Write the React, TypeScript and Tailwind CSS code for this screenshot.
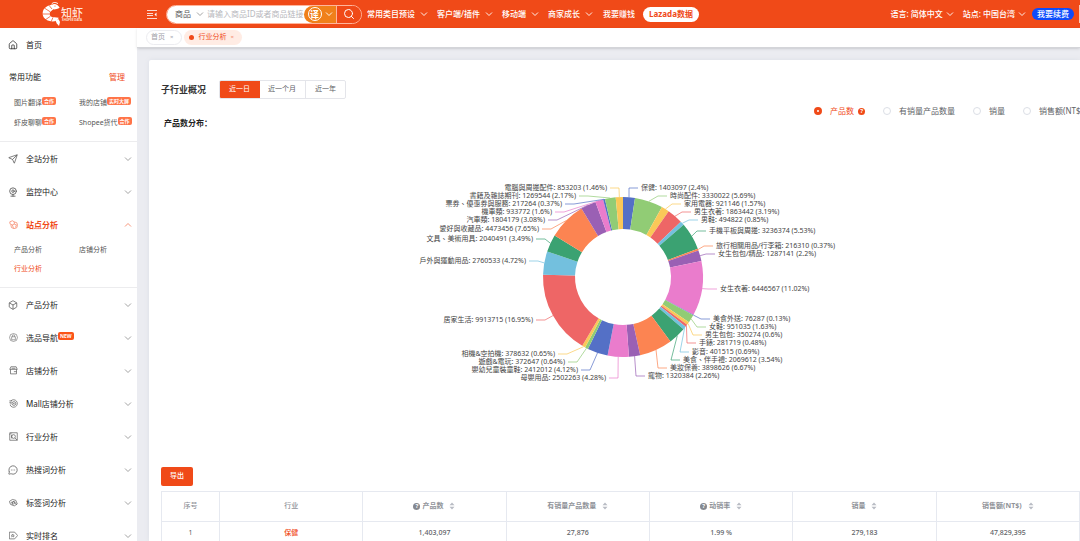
import type { ReactNode } from "react";
import { Box, House, MessageCircleMore, Search, Send, Webcam } from "lucide-react";

const PALETTE = [
  "#5470c6",
  "#91cc75",
  "#fac858",
  "#ee6666",
  "#73c0de",
  "#3ba272",
  "#fc8452",
  "#9a60b4",
  "#ea7ccc",
];

interface Slice {
  name: string;
  value: number;
  pct: string;
  x: number;
  y: number;
}

// x is the label's inner edge, y its middle line
const SLICES: Slice[] = [
  { name: "保健", value: 1403097, pct: "2.4", x: 250, y: 38 },
  { name: "時尚配件", value: 3330022, pct: "5.69", x: 279, y: 46 },
  { name: "家用電器", value: 921146, pct: "1.57", x: 293, y: 54 },
  { name: "男生衣著", value: 1863442, pct: "3.19", x: 303, y: 62 },
  { name: "男鞋", value: 494822, pct: "0.85", x: 310, y: 70 },
  { name: "手機平板與周邊", value: 3236374, pct: "5.53", x: 318, y: 81 },
  { name: "旅行相關用品/行李箱", value: 216310, pct: "0.37", x: 325, y: 96 },
  { name: "女生包包/精品", value: 1287141, pct: "2.2", x: 327, y: 104 },
  { name: "女生衣著", value: 6446567, pct: "11.02", x: 329, y: 139 },
  { name: "美食外送", value: 76287, pct: "0.13", x: 322, y: 169 },
  { name: "女鞋", value: 951035, pct: "1.63", x: 318, y: 177 },
  { name: "男生包包", value: 350274, pct: "0.6", x: 314, y: 185 },
  { name: "手錶", value: 281719, pct: "0.48", x: 308, y: 193 },
  { name: "影音", value: 401515, pct: "0.69", x: 301, y: 202 },
  { name: "美食、伴手禮", value: 2069612, pct: "3.54", x: 292, y: 210 },
  { name: "美妝保養", value: 3898626, pct: "6.67", x: 279, y: 218 },
  { name: "寵物", value: 1320384, pct: "2.26", x: 257, y: 226 },
  { name: "母嬰用品", value: 2502263, pct: "4.28", x: 215, y: 228 },
  { name: "嬰幼兒童裝童鞋", value: 2412012, pct: "4.12", x: 187, y: 220 },
  { name: "遊戲&電玩", value: 372647, pct: "0.64", x: 174, y: 212 },
  { name: "相機&空拍機", value: 378632, pct: "0.65", x: 164, y: 204 },
  { name: "居家生活", value: 9913715, pct: "16.95", x: 142, y: 170 },
  { name: "戶外與運動用品", value: 2760533, pct: "4.72", x: 135, y: 111 },
  { name: "文具、美術用具", value: 2040491, pct: "3.49", x: 142, y: 89 },
  { name: "愛好與收藏品", value: 4473456, pct: "7.65", x: 148, y: 79 },
  { name: "汽車類", value: 1804179, pct: "3.08", x: 154, y: 70 },
  { name: "機車類", value: 933772, pct: "1.6", x: 161, y: 62 },
  { name: "票券、優惠券與服務", value: 217264, pct: "0.37", x: 171, y: 54 },
  { name: "書籍及雜誌期刊", value: 1269544, pct: "2.17", x: 185, y: 46 },
  { name: "電腦與周邊配件", value: 853203, pct: "1.46", x: 216, y: 38 },
];

const CX = 232;
const CY = 127;
const OUTER = 80;
const INNER = 48;

function point(radius: number, angle: number) {
  return [CX + radius * Math.sin(angle), CY - radius * Math.cos(angle)];
}

function DonutChart() {
  const total = SLICES.reduce((sum, s) => sum + s.value, 0);
  let acc = 0;

  return (
    <svg
      viewBox="0 0 460 300"
      className="mx-auto block h-[300px] w-[460px]"
      role="img"
      aria-label="产品数分布"
    >
      {SLICES.map((s, i) => {
        const start = (acc / total) * Math.PI * 2;
        acc += s.value;
        const end = (acc / total) * Math.PI * 2;
        const mid = (start + end) / 2;
        const color = PALETTE[i % PALETTE.length];
        const right = i < 17;
        const dir = right ? -1 : 1;
        const edge = point(OUTER, mid);
        const arc = [
          `M${point(OUTER, start)}`,
          `A${OUTER} ${OUTER} 0 0 1 ${point(OUTER, end)}`,
          `L${point(INNER, end)}`,
          `A${INNER} ${INNER} 0 0 0 ${point(INNER, start)}Z`,
        ].join(" ");

        return (
          <g key={s.name}>
            <path d={arc} fill={color} />
            <polyline
              points={`${edge} ${s.x + dir * 12},${s.y} ${s.x + dir * 3},${s.y}`}
              fill="none"
              stroke={color}
              strokeWidth="0.7"
            />
            <text
              x={s.x}
              y={s.y + 2}
              textAnchor={right ? "start" : "end"}
              className="fill-[#444] font-['Noto_Sans','Noto_Sans_CJK_TC',sans-serif] text-[7px]"
            >
              {`${s.name}: ${s.value} (${s.pct}%)`}
            </text>
          </g>
        );
      })}
    </svg>
  );
}

function Chevron({ up, className = "" }: { up?: boolean; className?: string }) {
  return (
    <svg
      viewBox="0 0 8 8"
      fill="none"
      stroke="currentColor"
      className={`size-2 shrink-0 ${className}`}
    >
      <path d={up ? "M1 5.5L4 2.5L7 5.5" : "M1 2.5L4 5.5L7 2.5"} strokeWidth="0.9" />
    </svg>
  );
}

function Logo() {
  return (
    <div className="flex w-[137px] shrink-0 items-center justify-center gap-px pr-3">
      <svg viewBox="0 0 54 72" className="h-6 w-[18px]" fill="none">
        <path
          d="M30 8C38 3 48 8 53 17C46 20 40 23 34 22L25 29C20 36 23 42 31 45L50 47C47 56 38 60 26 58C10 55 1 45 2 33C3 20 12 11 30 8Z"
          fill="#fff"
        />
        <path d="M40 55L50 52L54 60L51 72L44 64Z" fill="#fff" />
        <path d="M29 7C32 0 41 0 48 5" stroke="#fff" strokeWidth="3" />
        <path
          d="M24 29L7 18M21 36L1 36M25 43L9 54M33 46L27 60M30 21L21 10"
          stroke="#f04a18"
          strokeWidth="2.2"
        />
        <circle cx="39" cy="12" r="1.6" fill="#f04a18" />
      </svg>
      <div className="flex flex-col items-center text-[#ffe3d8]">
        <span className="text-[11px] leading-[11px] font-medium">知虾</span>
        <span className="text-[3px] leading-[4px] font-bold">SHOPEE DATA</span>
      </div>
    </div>
  );
}

const NAV = ["常用类目预设", "客户端/插件", "移动端", "商家成长"];

function Header() {
  return (
    <header className="flex h-7 shrink-0 items-center bg-[#f04a18] text-[8px] whitespace-nowrap text-white">
      <Logo />
      <button type="button" aria-label="收起菜单" className="ml-[10px] shrink-0">
        <svg viewBox="0 0 10 9" className="h-[9px] w-[10px]" fill="none" stroke="#fff">
          <path d="M0 .5H10M0 3.5H6M0 5.5H6M0 8.5H10" strokeWidth="0.8" />
          <path d="M9.5 2.5V6.5L7.5 4.5Z" fill="#fff" stroke="none" />
        </svg>
      </button>

      <form className="ml-[9px] flex h-[19px] shrink-0 overflow-hidden rounded-full border border-[#ffb59c]">
        <div className="relative flex w-[39px] items-center bg-white pl-2 text-[#555]">
          <select aria-label="搜索类型" className="w-full appearance-none outline-none">
            <option>商品</option>
          </select>
          <Chevron className="pointer-events-none absolute right-[2px] text-[#999]" />
        </div>
        <div className="flex bg-white">
          <input
            type="text"
            aria-label="搜索"
            placeholder="请输入商品ID或者商品链接"
            className="w-[98px] pl-px text-[#555] outline-none placeholder:text-[#b8b8bd]"
          />
          <button
            type="button"
            aria-label="翻译"
            className="flex w-8 items-center justify-center gap-[3px] rounded-l-full bg-[#f0801a]"
          >
            <span className="flex size-[14px] items-center justify-center rounded-full border border-white text-[9px] leading-none font-bold">
              译
            </span>
            <Chevron />
          </button>
        </div>
        <button
          type="submit"
          aria-label="查找"
          className="flex w-[25px] items-center justify-center border-l border-[#ffb59c] bg-[#f04a18]"
        >
          <Search className="size-3" strokeWidth={2} />
        </button>
      </form>

      <nav className="ml-[5px] flex shrink-0 items-center gap-[9px] font-medium">
        {NAV.map((label) => (
          <button key={label} type="button" className="flex items-center gap-[5px]">
            {label}
            <Chevron />
          </button>
        ))}
        <a href="#earn" className="ml-px">我要赚钱</a>
      </nav>
      <a
        href="#lazada"
        className="ml-2 flex h-[15px] shrink-0 items-center rounded-full bg-white px-[6px] font-bold text-[#f04a18]"
      >
        Lazada数据
      </a>

      <div className="ml-auto flex shrink-0 items-center font-medium">
        <button type="button" className="flex items-center gap-[3px]">
          语言: 简体中文
          <Chevron />
        </button>
        <button type="button" className="ml-[9px] flex items-center gap-[3px]">
          站点: 中国台湾
          <Chevron />
        </button>
        <button
          type="button"
          className="ml-[6px] flex h-3 items-center rounded-full bg-[#0d4bfb] px-[5px]"
        >
          我要续费
        </button>
        <span className="ml-[5px] h-[18px] w-px bg-[#ffc9b8]" />
      </div>
    </header>
  );
}

function Glyph({ children }: { children: ReactNode }) {
  return (
    <svg
      viewBox="0 0 24 24"
      fill="none"
      stroke="currentColor"
      strokeWidth="1.8"
      strokeLinejoin="round"
      className="size-[9px]"
    >
      {children}
    </svg>
  );
}

function Badge({ children, strong }: { children: ReactNode; strong?: boolean }) {
  return (
    <span
      className={`mb-1 rounded-[2px] px-[2px] text-[5px] leading-[8px] font-bold text-white ${
        strong ? "bg-[#fb5418]" : "bg-[#ff7448]"
      }`}
    >
      {children}
    </span>
  );
}

interface MenuRowProps {
  icon: ReactNode;
  label: string;
  open?: boolean;
  badge?: string;
}

function MenuRow({ icon, label, open, badge }: MenuRowProps) {
  return (
    <button
      type="button"
      aria-expanded={!!open}
      className={`flex h-[33px] w-full items-center pr-[5px] pl-2 ${
        open ? "font-bold text-[#f04a18]" : "text-[#222]"
      }`}
    >
      <span
        className={`flex size-[10px] items-center justify-center ${
          open ? "text-[#f57a5a]" : "text-[#555]"
        }`}
      >
        {icon}
      </span>
      <span className="ml-2">{label}</span>
      {badge && <Badge strong>{badge}</Badge>}
      <Chevron up={open} className={`ml-auto ${open ? "text-[#f58a6c]" : "text-[#999]"}`} />
    </button>
  );
}

const SHORTCUTS = [
  { label: "图片翻译", badge: "合作" },
  { label: "我的店铺", badge: "实时大屏" },
  { label: "虾皮聊聊", badge: "合作" },
  { label: "Shopee货代", badge: "合作" },
];

function Sidebar() {
  return (
    <aside className="w-[137px] shrink-0 overflow-hidden bg-white text-[8px] whitespace-nowrap">
      <section className="border-b border-[#ececee] pb-2">
        <a href="#home" className="flex h-[33px] items-center pl-2 text-[#222]">
          <House className="size-[10px]" strokeWidth={1.8} />
          <span className="ml-2">首页</span>
        </a>
        <div className="flex h-8 items-center justify-between pr-3 pl-[9px] text-[#222]">
          <span>常用功能</span>
          <button type="button" className="text-[#f04a18]">
            管理
          </button>
        </div>
        <div className="grid grid-cols-[65px_1fr] pl-[14px] text-[7px] text-[#555]">
          {SHORTCUTS.map((s) => (
            <a key={s.label} href="#tool" className="flex h-5 items-center">
              {s.label}
              <Badge>{s.badge}</Badge>
            </a>
          ))}
        </div>
      </section>

      <section className="border-b border-[#ececee] pb-2">
        <MenuRow icon={<Send className="size-[10px]" strokeWidth={1.8} />} label="全站分析" />
        <MenuRow icon={<Webcam className="size-[10px]" strokeWidth={2} />} label="监控中心" />
        <MenuRow
          open
          label="站点分析"
          icon={
            <Glyph>
              <path d="M2 5L9 2L14 5V11L9 13L3 11ZM14 5A9 9 0 1 1 5 13M9 13L12 22M14 11L20 13L17 20" />
            </Glyph>
          }
        />
        <div className="grid grid-cols-[65px_1fr] pl-[14px] text-[7px] text-[#555]">
          <a href="#product" className="flex h-[19px] items-center">产品分析</a>
          <a href="#shop" className="flex h-[19px] items-center">店铺分析</a>
          <a href="#industry" className="flex h-[19px] items-center text-[#f04a18]">行业分析</a>
        </div>
      </section>

      <section>
        <MenuRow icon={<Box className="size-[10px]" strokeWidth={1.8} />} label="产品分析" />
        <MenuRow
          label="选品导航"
          badge="NEW"
          icon={
            <Glyph>
              <circle cx="12" cy="12" r="10.5" strokeWidth="1.4" />
              <path d="M7 10H17V18H7ZM9 10V8A3 3 0 0 1 15 8V10" strokeWidth="1.4" />
            </Glyph>
          }
        />
        <MenuRow
          label="店铺分析"
          icon={
            <Glyph>
              <path d="M5 2H19L22 9H2ZM4 9V21H20V9M7 6H17M13 15H20" />
            </Glyph>
          }
        />
        <MenuRow
          label="Mall店铺分析"
          icon={
            <Glyph>
              <path d="M5 5A10 10 0 1 1 3 16M1 5H8M1 9H7M2 13H6" />
              <circle cx="13" cy="12" r="5" />
              <circle cx="13" cy="12" r="1" />
            </Glyph>
          }
        />
        <MenuRow
          label="行业分析"
          icon={
            <Glyph>
              <path d="M2 2H22V22H2ZM2 7L7 2M16 16L22 22M7 7V17" />
              <circle cx="12" cy="12" r="5" />
            </Glyph>
          }
        />
        <MenuRow
          icon={<MessageCircleMore className="size-[10px]" strokeWidth={1.8} />}
          label="热搜词分析"
        />
        <MenuRow
          label="标签词分析"
          icon={
            <Glyph>
              <path d="M1 9L9 4L18 6L22 16L14 21L4 17ZM5 12L14 9L20 18M9 18L8 14" />
              <circle cx="12" cy="13" r="3" />
            </Glyph>
          }
        />
        <MenuRow
          label="实时排名"
          icon={
            <Glyph>
              <path d="M1 3H15L23 12L15 21H1Z" />
              <path d="M10 8L11 11H14L12 13L13 16L10 14L7 16L8 13L6 11H9Z" strokeWidth="1.4" />
            </Glyph>
          }
        />
      </section>
    </aside>
  );
}

function Tabs() {
  return (
    <div className="z-10 flex h-5 shrink-0 items-center gap-[2px] border-b border-[#d4d5d9] bg-white pl-[9px] text-[7px] shadow-sm">
      <a
        href="#home"
        className="flex h-[15px] items-center gap-[5px] rounded-full border border-[#ececf0] px-1 pr-2 text-[#a0a0a8]"
      >
        首页 <span className="text-[6px]">×</span>
      </a>
      <a
        href="#industry"
        className="flex h-[15px] items-center gap-1 rounded-full bg-[#ffece4] px-[5px] pr-2 text-[#f04a18]"
      >
        <i className="size-[5px] rounded-full bg-[#f04a18]" />
        行业分析 <span className="text-[6px] text-[#f58a6c]">×</span>
      </a>
    </div>
  );
}

function Help({ className }: { className: string }) {
  return (
    <span
      className={`flex size-[7px] items-center justify-center rounded-full text-[6px] leading-none font-bold text-white ${className}`}
    >
      ?
    </span>
  );
}

function SortArrows() {
  return (
    <svg viewBox="0 0 6 8" className="ml-[6px] h-2 w-[6px] fill-[#b9bcc4]">
      <path d="M3 0.5L5.5 3.3H.5ZM3 7.5L.5 4.7H5.5Z" />
    </svg>
  );
}

const METRICS = [
  { label: "产品数", help: true },
  { label: "有销量产品数量" },
  { label: "销量" },
  { label: "销售额(NT$)" },
];

const COLUMNS = [
  { label: "产品数", help: true },
  { label: "有销量产品数量" },
  { label: "动销率", help: true },
  { label: "销量" },
  { label: "销售额(NT$)" },
];

const ROW = ["1,403,097", "27,876", "1.99 %", "279,183", "47,829,395"];

function IndustryTable() {
  return (
    <table className="w-full table-fixed border-collapse text-center text-[7px] text-[#606266]">
      <thead className="text-[#909399]">
        <tr className="h-[30px]">
          <th className="w-[58px] border border-[#e6e9f0] font-medium">序号</th>
          <th className="border border-[#e6e9f0] font-medium">行业</th>
          {COLUMNS.map((c) => (
            <th key={c.label} className="border border-[#e6e9f0] font-bold">
              <button type="button" className="inline-flex items-center align-middle">
                {c.help && <Help className="mr-[2px] bg-[#85888f]" />}
                {c.label}
                <SortArrows />
              </button>
            </th>
          ))}
        </tr>
      </thead>
      <tbody>
        <tr className="h-6">
          <td className="border border-[#e6e9f0]">1</td>
          <td className="border border-[#e6e9f0]">
            <a href="#health" className="font-medium text-[#f04a18]">保健</a>
          </td>
          {ROW.map((v) => (
            <td key={v} className="border border-[#e6e9f0] font-medium">{v}</td>
          ))}
        </tr>
      </tbody>
    </table>
  );
}

export default function App() {
  return (
    <div className="flex h-screen flex-col overflow-hidden font-['Noto_Sans','Noto_Sans_CJK_SC',sans-serif]">
      <Header />
      <div className="flex min-h-0 flex-1">
        <Sidebar />
        <main className="flex min-w-0 flex-1 flex-col bg-[#ebecf1]">
          <Tabs />
          <div className="mt-3 ml-3 min-h-0 flex-1 overflow-hidden rounded-tl-[2px] bg-white pt-5 pl-3 whitespace-nowrap shadow-[0_0_5px_#dcdfe6]">
            <div className="flex items-center gap-[13px]">
              <h1 className="text-[9px] font-bold text-[#333]">子行业概况</h1>
              <div className="flex h-[19px] overflow-hidden rounded-[2px] border border-[#e4e5ea] text-[7px] text-[#606266]">
                <button type="button" className="-m-px bg-[#f04a18] px-[10px] text-white">近一日</button>
                <button type="button" className="px-[9px]">近一个月</button>
                <button type="button" className="border-l border-[#e4e5ea] px-[9px]">近一年</button>
              </div>
            </div>

            <fieldset className="mt-[6px] -mr-[3px] flex h-3 justify-end gap-[18px] text-[8px] text-[#606266]">
              {METRICS.map((m, i) => (
                <label key={m.label} className="flex shrink-0 items-center has-checked:text-[#f04a18]">
                  <input
                    type="radio"
                    name="metric"
                    defaultChecked={i === 0}
                    className="mr-2 size-2 appearance-none rounded-full border border-[#dcdfe6] bg-white checked:border-[3px] checked:border-[#f04a18]"
                  />
                  {m.label}
                  {m.help && <Help className="ml-1 bg-[#f04a18]" />}
                </label>
              ))}
            </fieldset>

            <h2 className="ml-[3px] text-[8px] leading-3 font-bold text-[#222]">产品数分布：</h2>

            <div className="pt-[21px]">
              <DonutChart />
            </div>

            <button
              type="button"
              className="mt-[17px] block h-[19px] rounded-[2px] bg-[#f04a18] px-[9px] text-[7px] font-medium text-white"
            >
              导出
            </button>
            <div className="mt-[5px]">
              <IndustryTable />
            </div>
          </div>
        </main>
      </div>
    </div>
  );
}
